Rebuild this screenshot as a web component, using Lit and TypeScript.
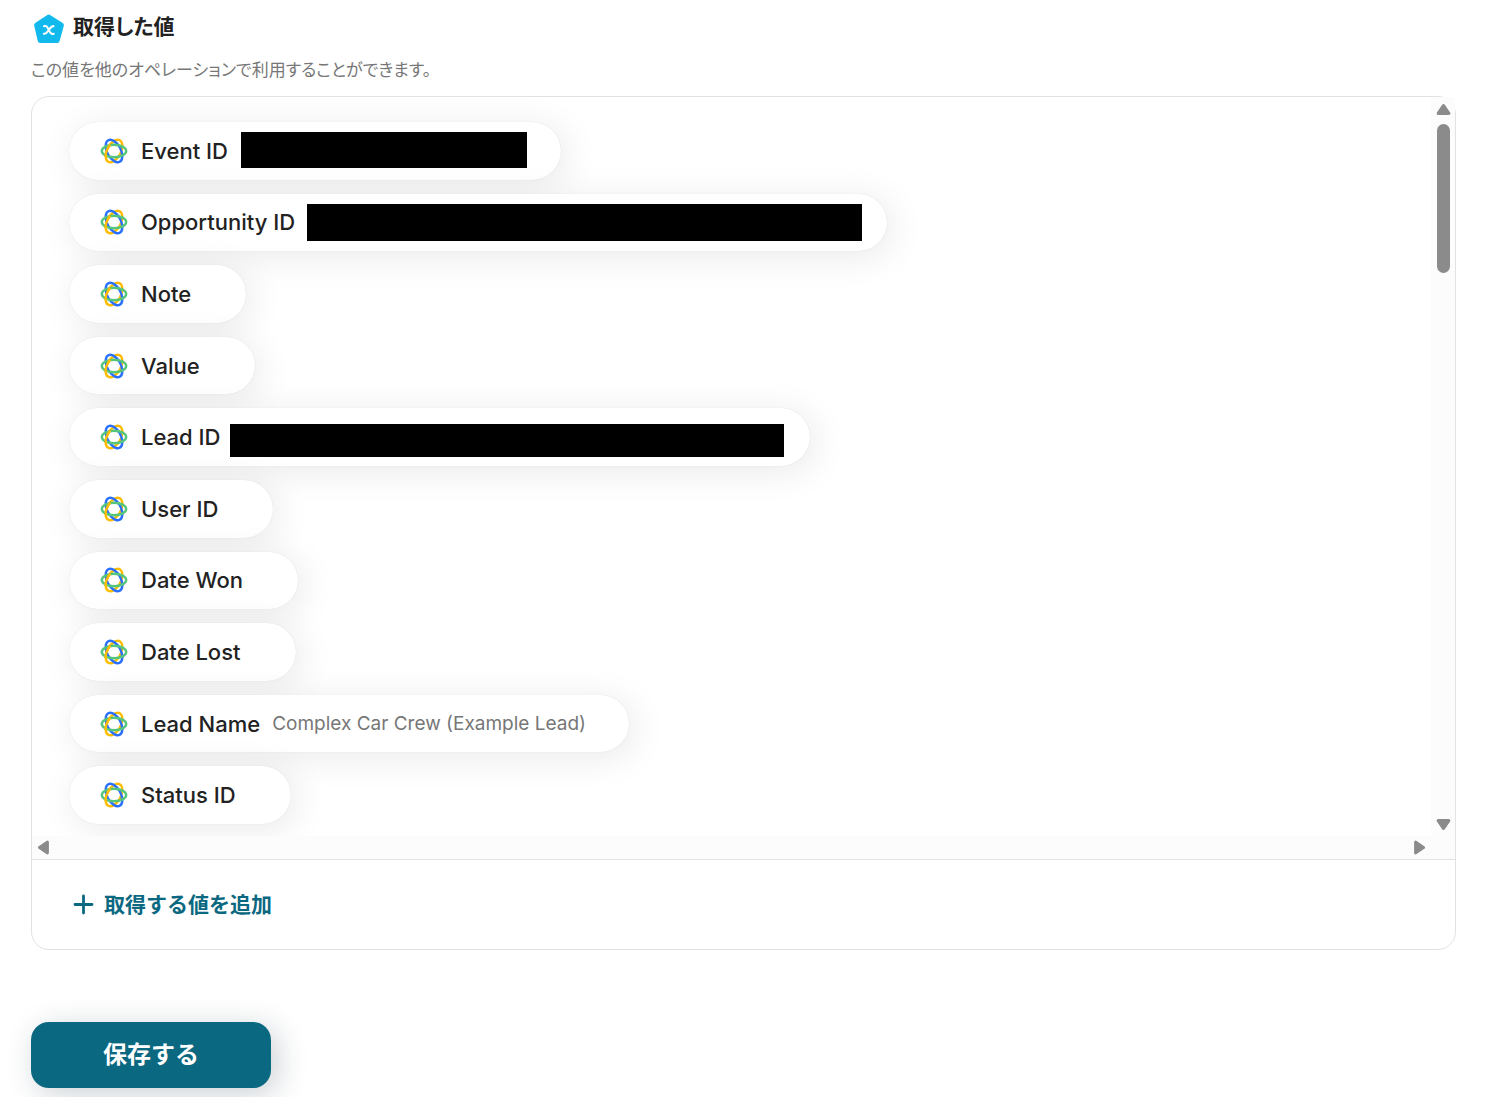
import { LitElement, html, css, svg, nothing } from "lit";
import { customElement, property } from "lit/decorators.js";
import { styleMap } from "lit/directives/style-map.js";

interface Mask {
  slot: number;
  left: number;
  top: number;
  width: number;
  height: number;
}

interface Item {
  name: string;
  value?: string;
  mask?: Mask;
}

const ITEMS: Item[] = [
  { name: "Event ID", mask: { slot: 278, left: 1, top: -19, width: 286, height: 36 } },
  { name: "Opportunity ID", mask: { slot: 537, left: 0, top: -18, width: 555, height: 37 } },
  { name: "Note" },
  { name: "Value" },
  { name: "Lead ID", mask: { slot: 535, left: -2, top: -13, width: 554, height: 33 } },
  { name: "User ID" },
  { name: "Date Won" },
  { name: "Date Lost" },
  { name: "Lead Name", value: "Complex Car Crew (Example Lead)" },
  { name: "Status ID" },
];

const closeLogo = svg`
  <g fill="none" stroke-width="2.4">
    <ellipse cx="14" cy="14" rx="12.2" ry="6.8" stroke="#ffbc00" transform="rotate(-62 14 14)" />
    <ellipse cx="14" cy="14" rx="12.2" ry="6.8" stroke="#2a70ff" transform="rotate(62 14 14)" />
    <ellipse cx="14" cy="14" rx="12.2" ry="6.2" stroke="#55c57c" />
    <path d="M4.8 9.5A12.2 6.8 0 0 1 18 7.600" stroke="#ffbc00" transform="rotate(-62 14 14)" />
  </g>`;

@customElement("value-chip")
export class ValueChip extends LitElement {
  @property({ attribute: false }) item!: Item;

  static styles = css`
    :host {
      display: flex;
    }
    .chip {
      display: flex;
      align-items: center;
      box-sizing: border-box;
      padding: 0 43px 0 31px;
      border-radius: 29px;
      background: #fff;
      box-shadow: 0 0 1px rgba(0, 0, 0, 0.14), 5px 5px 36px rgba(0, 0, 0, 0.09);
      white-space: nowrap;
    }
    .logo {
      width: 28px;
      height: 28px;
      margin-right: 13px;
      flex: none;
    }
    .name {
      margin-right: 12px;
      font-size: 22px;
      font-weight: 500;
      color: #222;
    }
    .value {
      font-size: 19px;
      color: #777;
    }
    .slot {
      position: relative;
    }
    .mask {
      position: absolute;
      background: #000;
    }
  `;

  render() {
    const { name, value, mask } = this.item;
    return html`
      <div class="chip">
        <svg class="logo" viewBox="0 0 28 28" aria-hidden="true">${closeLogo}</svg>
        <span class="name">${name}</span>
        ${value ? html`<span class="value">${value}</span>` : nothing}
        ${mask
          ? html`<span class="slot" style=${styleMap({ width: `${mask.slot}px` })}>
              <span
                class="mask"
                style=${styleMap({
                  left: `${mask.left}px`,
                  top: `${mask.top}px`,
                  width: `${mask.width}px`,
                  height: `${mask.height}px`,
                })}
              ></span>
            </span>`
          : nothing}
      </div>
    `;
  }
}

@customElement("app-root")
export class AppRoot extends LitElement {
  static styles = css`
    :host {
      display: block;
      padding: 11px 45px 9px 31px;
      background: #fff;
      color: #222;
      font-family: Inter, "Noto Sans CJK JP", sans-serif;
    }
    .head {
      display: flex;
      align-items: flex-start;
      gap: 8px;
    }
    .badge {
      width: 34px;
      height: 34px;
      flex: none;
    }
    .title {
      margin: 0;
      font-size: 21px;
      line-height: 32px;
      font-weight: 600;
      font-feature-settings: "palt";
    }
    .desc {
      margin: 13px 0 13px;
      font-size: 17px;
      line-height: 25px;
      color: #777;
      font-feature-settings: "palt";
    }
    .panel {
      border: 1px solid #e2e2e2;
      border-radius: 18px;
    }
    .scroller {
      display: grid;
      grid-template-columns: 1fr 24px;
      grid-template-rows: 739px 23px;
      border-bottom: 1px solid #e2e2e2;
    }
    .list {
      display: grid;
      grid-auto-rows: 1fr;
      gap: 14px;
      margin: 0;
      padding: 25px 37px 12px;
      list-style: none;
      overflow: hidden;
      border-top-left-radius: 17px;
    }
    .item {
      display: grid;
    }
    .bar {
      display: flex;
      align-items: center;
      background: #fcfcfc;
    }
    .bar-y {
      flex-direction: column;
      padding: 5px 0 4px;
    }
    .bar-x {
      justify-content: space-between;
      padding: 0 4px;
    }
    .corner {
      background: #fcfcfc;
    }
    .thumb {
      width: 13px;
      height: 149px;
      margin: 7px 0 auto;
      border-radius: 7px;
      background: #8b8b8b;
    }
    .arrow {
      display: flex;
      padding: 0;
      border: 0;
      background: none;
      color: #8b8b8b;
    }
    .foot {
      display: flex;
      padding: 28px 41px;
    }
    .add {
      display: flex;
      align-items: center;
      gap: 10px;
      padding: 0;
      border: 0;
      background: none;
      color: #0b6881;
      font: inherit;
      font-size: 21px;
      line-height: 33px;
      font-weight: 600;
    }
    .save {
      display: block;
      width: 240px;
      margin-top: 72px;
      padding: 15px 0;
      border: 0;
      border-radius: 18px;
      background: #0b6881;
      box-shadow: 6px 6px 30px rgba(20, 40, 60, 0.22);
      color: #fff;
      font: inherit;
      font-size: 24px;
      line-height: 36px;
      font-weight: 700;
    }
  `;

  private arrow(label: string, angle: number) {
    return html`<button class="arrow" type="button" aria-label=${label}>
      <svg width="15" height="15" viewBox="0 0 15 15">
        <path
          d="M7.500 3.600 12.800 11.300H2.200Z"
          fill="currentColor"
          stroke="currentColor"
          stroke-width="3.200"
          stroke-linejoin="round"
          transform="rotate(${angle} 7.500 7.500)"
        />
      </svg>
    </button>`;
  }

  render() {
    return html`
      <div class="head">
        <svg class="badge" viewBox="0 0 34 34" aria-hidden="true">
          <path
            d="M17.700 6 30.400 14 26.200 29.400H9.200L5.600 14Z"
            fill="#11b9ec"
            stroke="#11b9ec"
            stroke-width="5"
            stroke-linejoin="round"
          />
          <path
            d="M13 15.200C15.600 14.400 16.200 16 17.800 19S20.200 23.600 22.800 22.800M22.600 15.200C20.400 14.600 20 16.200 17.800 19S15 23.400 12.800 22.800"
            fill="none"
            stroke="#fff"
            stroke-width="2"
            stroke-linecap="round"
          />
        </svg>
        <h2 class="title">取得した値</h2>
      </div>
      <p class="desc">この値を他のオペレーションで利用することができます。</p>
      <section class="panel">
        <div class="scroller">
          <ul class="list">
            ${ITEMS.map((item) => html`<li class="item"><value-chip .item=${item}></value-chip></li>`)}
          </ul>
          <div class="bar bar-y">
            ${this.arrow("上へ", 0)}
            <div class="thumb"></div>
            ${this.arrow("下へ", 180)}
          </div>
          <div class="bar bar-x">${this.arrow("左へ", -90)} ${this.arrow("右へ", 90)}</div>
          <div class="corner"></div>
        </div>
        <div class="foot">
          <button class="add" type="button">
            <svg width="21" height="21" viewBox="0 0 21 21" aria-hidden="true">
              <path d="M10.500 2v17M2 10.500h17" stroke="currentColor" stroke-width="2.800" stroke-linecap="round" />
            </svg>
            取得する値を追加
          </button>
        </div>
      </section>
      <button class="save" type="button">保存する</button>
    `;
  }
}
